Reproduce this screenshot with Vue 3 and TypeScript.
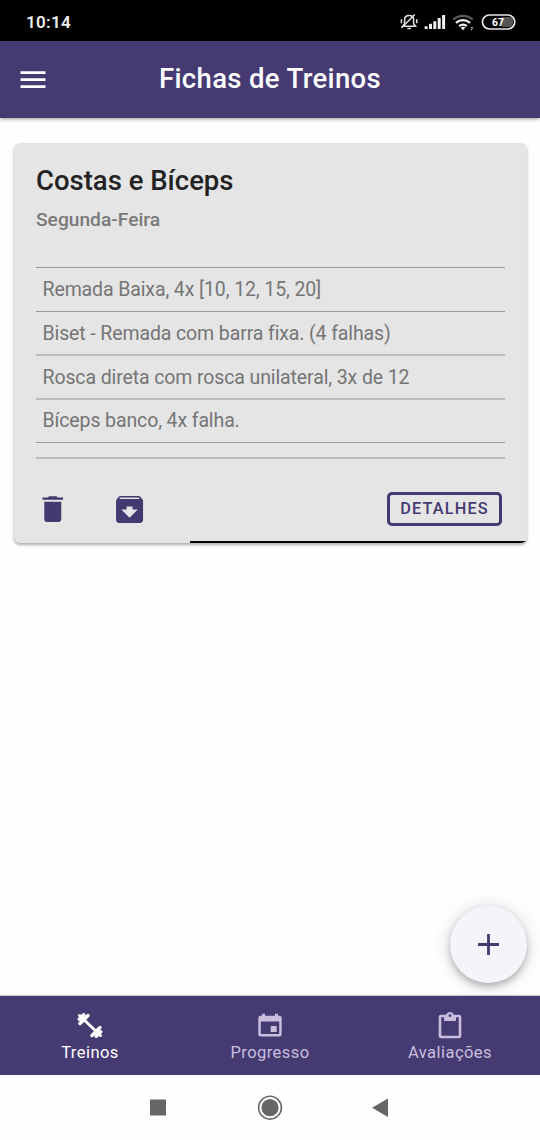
<script setup lang="ts">
interface Exercise { text: string; soft: boolean }
interface Tab { label: string; icon: 'dumbbell' | 'calendar' | 'clipboard'; active: boolean }

const exercises: Exercise[] = [
  { text: 'Remada Baixa, 4x [10, 12, 15, 20]', soft: false },
  { text: 'Biset - Remada com barra fixa. (4 falhas)', soft: true },
  { text: 'Rosca direta com rosca unilateral, 3x de 12', soft: true },
  { text: 'Bíceps banco, 4x falha.', soft: false },
]

const tabs: Tab[] = [
  { label: 'Treinos', icon: 'dumbbell', active: true },
  { label: 'Progresso', icon: 'calendar', active: false },
  { label: 'Avaliações', icon: 'clipboard', active: false },
]
</script>

<template>
  <div class="screen">
    <div class="status">
      <span class="clock">10:14</span>
      <svg class="status-icons" width="120" height="22" viewBox="398 11 120 22">
        <g fill="none" stroke="#e2e2e2" stroke-width="1.5">
          <path d="M402.600 26.300h13l-2-2.600v-4c0-2.800-1.800-4.300-4.500-4.300s-4.500 1.500-4.500 4.300v4z" />
          <path d="M401.500 28L414.800 14.500" />
          <path d="M407.300 28.600h3.600M401.400 19.200v4M416.700 19.200v4" />
        </g>
        <g fill="#f2f2f2">
          <rect x="424.600" y="26.200" width="3" height="2.800" rx=".6" />
          <rect x="429" y="23.800" width="3" height="5.200" rx=".6" />
          <rect x="433.300" y="21.200" width="3" height="7.800" rx=".6" />
          <rect x="437.700" y="18" width="3" height="11" rx=".6" />
          <rect x="442.100" y="15" width="3" height="14" rx=".6" />
        </g>
        <g fill="none" stroke-width="2.300">
          <path stroke="#5b5b5b" d="M453.300 19.600c5.600-5 13.800-5 19.400 0" />
          <path stroke="#f2f2f2" d="M456 22.900c4.100-3.700 9.900-3.700 14 0" />
          <path stroke="#f2f2f2" d="M459.200 26.200c2.200-2 5.400-2 7.600 0" />
        </g>
        <path fill="#f2f2f2" d="M460.600 27.500q2.400-1.500 4.800 0L463 30.200z" />
        <path fill="none" stroke="#8a8a8a" stroke-width="1.200" d="M470.500 27.500h2l-1.400 3" />
        <rect x="500" y="17" width="13" height="10" rx="4" fill="#555" />
        <rect x="482.400" y="15" width="32.400" height="14" rx="7" fill="none" stroke="#e8e8e8" stroke-width="1.700" />
        <text x="498" y="26" text-anchor="middle" class="battery">67</text>
      </svg>
    </div>

    <header class="appbar">
      <svg class="menu" width="26" height="18" viewBox="0 0 26 18" fill="#fff">
        <path d="M.500 0.200h25v2.800h-25zM.500 7.200h25v2.800h-25zM.500 14.200h25v2.800h-25z" />
      </svg>
      <h1>Fichas de Treinos</h1>
    </header>

    <main>
      <section class="card">
        <h2>Costas e Bíceps</h2>
        <h3>Segunda-Feira</h3>
        <ul>
          <li v-for="e in exercises" :key="e.text" :class="{ soft: e.soft }">{{ e.text }}</li>
          <li class="end"></li>
        </ul>
        <div class="actions">
          <svg width="36" height="36" viewBox="0 0 24 24">
            <path d="M18.700 4.400h-3.500l-1-.9H9.500l-1 .9H5v1.400h13.700zM6.200 18.800c0 1.100.7 1.800 1.800 1.800h7.700c1.100 0 1.800-.7 1.800-1.800V7.200H6.200z" />
          </svg>
          <svg class="archive" width="36" height="36" viewBox="0 0 24 24">
            <path transform="translate(-.3 .3)" d="M20.540 5.230l-1.390-1.680C18.880 3.210 18.470 3 18 3H6c-.47 0-.88.21-1.160.55L3.460 5.230C3.170 5.570 3 6.020 3 6.500V19c0 1.100.9 2 2 2h14c1.100 0 2-.9 2-2V6.500c0-.48-.17-.93-.46-1.270zM12 17.500L6.500 12H10v-2h4v2h3.500L12 17.500zM5.120 5l.81-1h12l.94 1H5.120z" />
          </svg>
          <button>DETALHES</button>
        </div>
        <div class="progress"></div>
      </section>
      <button class="fab" aria-label="Adicionar">
        <svg width="21" height="21" viewBox="0 0 21 21"><path d="M10.500 0v21M0 10.500h21" stroke="#453972" stroke-width="2.800" /></svg>
      </button>
    </main>

    <nav class="tabs">
      <div v-for="t in tabs" :key="t.label" class="tab" :class="{ active: t.active }">
        <svg v-if="t.icon === 'dumbbell'" width="30" height="30" viewBox="0 0 30 30">
          <g fill="none" stroke="#fff" stroke-width="3" stroke-linecap="round">
            <path d="M4.500 5.500L25.500 25.500" />
            <path stroke-width="3.400" d="M5 13.500L13 5.500M4.300 9.200L8.700 4.800M17 25.500L25 17.500M21.300 26.200L25.700 21.800" />
          </g>
        </svg>
        <svg v-else-if="t.icon === 'calendar'" width="30" height="30" viewBox="0 0 30 30">
          <path fill-rule="evenodd" d="M7 3.700h3v2.100h10V3.700h3v2.100h1.300a2.400 2.400 0 0 1 2.400 2.400v16a2.400 2.400 0 0 1-2.400 2.400H5.700a2.400 2.400 0 0 1-2.400-2.400v-16a2.400 2.400 0 0 1 2.400-2.400H7zM5.800 11.600v12.500h18.400V11.600zM15.700 16h6v6h-6z" />
        </svg>
        <svg v-else width="30" height="30" viewBox="0 0 30 30">
          <path fill-rule="evenodd" d="M6 4.700h5.200a4 4 0 0 1 7.600 0H24a2.300 2.300 0 0 1 2.300 2.300v19a2.300 2.300 0 0 1-2.300 2.300H6A2.300 2.300 0 0 1 3.700 26V7A2.300 2.300 0 0 1 6 4.700zM6.300 7.300v18.400h17.400V7.300H21v3.800H9V7.300zM15 4.300a1.400 1.400 0 1 0 0 2.800 1.400 1.400 0 0 0 0-2.800z" />
        </svg>
        <span>{{ t.label }}</span>
      </div>
    </nav>

    <div class="system">
      <svg width="540" height="65" viewBox="0 0 540 65">
        <rect x="150" y="24.500" width="16" height="16" fill="#666" />
        <circle cx="270" cy="32.700" r="11.400" fill="none" stroke="#666" stroke-width="1.600" />
        <circle cx="270" cy="32.700" r="8.600" fill="#666" />
        <path d="M372 32.700L388 23.500v18.400z" fill="#666" />
      </svg>
    </div>
  </div>
</template>

<style>
body { margin: 0; background: #fff; }
</style>

<style scoped>
.screen { width: 540px; height: 1140px; display: flex; flex-direction: column; background: #fefefe; font-family: Roboto, sans-serif; overflow: hidden; }
.status { height: 41px; flex: none; background: #000; display: flex; align-items: center; justify-content: space-between; padding: 3px 22px 0 26px; box-sizing: border-box; }
.clock { color: #eee; font-size: 17px; font-weight: 600; letter-spacing: .3px; }
.battery { font: 700 10.500px Roboto, sans-serif; fill: #fff; }
.appbar { height: 77px; flex: none; background: #463a73; display: grid; grid-template-columns: 60px 1fr 60px; align-items: center; box-shadow: 0 1px 4px rgba(0, 0, 0, .4); }
.menu { margin-left: 20px; }
h1 { margin: 0; padding-bottom: 2px; color: #fff; text-align: center; font-size: 27.500px; font-weight: 500; letter-spacing: .35px; white-space: nowrap; }
main { position: relative; flex: 1; padding: 25px 13px 0 14px; }
.card { height: 400px; box-sizing: border-box; padding: 22px 22px 0; display: flex; flex-direction: column; border-radius: 6px; background: #e5e5e5; box-shadow: 0 2px 3px rgba(0, 0, 0, .32); overflow: hidden; }
h2 { margin: 0; font-size: 27.500px; line-height: 32px; font-weight: 500; color: #222; }
h3 { margin: 12px 0 0; font-size: 19.200px; line-height: 22px; font-weight: 500; color: #7a7a7a; }
ul { list-style: none; margin: 36px 0 0; padding: 0; border-top: 1px solid #999; }
li { height: 44px; box-sizing: border-box; padding-left: 6.500px; font-size: 19.500px; letter-spacing: -.115px; line-height: 43px; color: #757575; border-bottom: 1px solid #999; white-space: nowrap; }
li.soft { border-bottom: 2px solid #bcbcbc; }
li:nth-child(4) { height: 43px; line-height: 42px; }
li.end { height: 16px; border-bottom: 2px solid #bcbcbc; }
.actions { display: flex; align-items: center; margin-top: 32px; height: 36px; margin-left: -1px; fill: #453972; }
.archive { margin-left: 41px; }
.actions button { margin-left: auto; margin-right: 3px; width: 115px; height: 34px; padding: 0 0 2px; border: 3px solid #453972; border-radius: 5px; background: transparent; color: #453972; font: 500 16.250px Roboto, sans-serif; letter-spacing: 1.150px; }
.progress { height: 2px; margin: auto -20px 0 154px; background: #000; flex: none; }
.fab { position: absolute; right: 13px; bottom: 13px; width: 77px; height: 77px; padding: 0; border: 0; border-radius: 50%; display: grid; place-items: center; background: #f4f5fa; box-shadow: 0 4px 7px rgba(0, 0, 0, .24), 0 1px 20px rgba(0, 0, 0, .14); }
.tabs { height: 79px; flex: none; display: grid; grid-template-columns: repeat(3, 1fr); background: #463a73; box-shadow: 0 -1px 1px rgba(0, 0, 0, .2); position: relative; }
.tab { display: flex; flex-direction: column; align-items: center; padding-top: 14px; color: #c8bfdf; fill: #c8bfdf; }
.tab.active { color: #fff; fill: #fff; }
.tab span { margin-top: 3px; font-size: 16.500px; line-height: 20px; letter-spacing: .45px; }
.system { height: 65px; flex: none; }
</style>
